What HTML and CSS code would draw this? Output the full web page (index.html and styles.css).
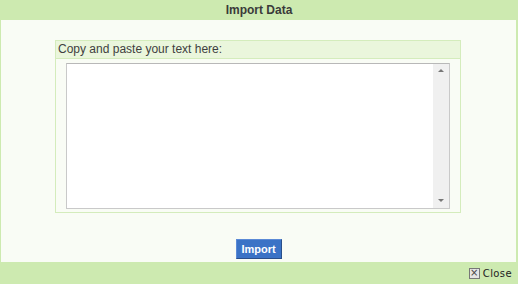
FILE: index.html
```html
<!DOCTYPE html>
<html lang="en">
<head>
    <meta charset="UTF-8">
    <title>Import Data</title>
    <link rel="stylesheet" href="styles.css">
</head>
<body>
    <div class="dialog">
        <div class="dialog-title">Import Data</div>

        <div class="dialog-body">
            <div class="import-box">
                <div class="import-label">Copy and paste your text here:</div>
                <div class="import-area">
                    <div class="text-wrap">
                        <textarea id="importText"></textarea>
                        <div class="scrollbar">
                            <span class="arrow-up"></span>
                            <span class="arrow-down"></span>
                        </div>
                    </div>
                </div>
            </div>
            <div class="actions">
                <button class="import-btn">Import</button>
            </div>
        </div>

        <div class="dialog-footer">
            <span class="close-link"><span class="close-icon">&times;</span>Close</span>
        </div>
    </div>
</body>
</html>
```

FILE: styles.css
```css
body {
    margin: 0;
    padding: 0;
    font-family: Arial, "Liberation Sans", sans-serif;
    background: #cdeab0;
}
.dialog {
    width: 518px;
    height: 284px;
    display: flex;
    flex-direction: column;
    background: #cdeab0;
}
.dialog-title {
    height: 20px;
    line-height: 21px;
    text-align: center;
    font-size: 12px;
    font-weight: bold;
    color: #3a3a3a;
}
.dialog-body {
    flex: 1;
    margin: 0 2px 1px 1px;
    background: #f9fcf5;
    padding-top: 20px;
    display: flex;
    flex-direction: column;
}
.import-box {
    margin: 0 55px 0 54px;
    border: 1px solid #d4ecbc;
}
.import-label {
    height: 17px;
    line-height: 17px;
    background: #eaf6dc;
    border-bottom: 1px solid #d4ecbc;
    font-size: 12px;
    color: #3f3f3f;
    padding-left: 2px;
}
.import-area {
    padding: 4px 10px 3px 10px;
}
.text-wrap {
    display: flex;
    height: 144px;
    border: 1px solid #c9c9c9;
    border-top-color: #b8b8b8;
    background: #fff;
}
.text-wrap textarea {
    flex: 1;
    border: none;
    resize: none;
    outline: none;
    padding: 2px;
    font-family: Arial, "Liberation Sans", sans-serif;
    font-size: 12px;
    background: #fff;
}
/* fake classic scrollbar */
.scrollbar {
    width: 16px;
    background: #f0f0f0;
    display: flex;
    flex-direction: column;
    justify-content: space-between;
    align-items: center;
    padding: 5px 0 6px 0;
}
.arrow-up, .arrow-down {
    width: 0;
    height: 0;
    border-left: 3px solid transparent;
    border-right: 3px solid transparent;
}
.arrow-up {
    border-bottom: 3px solid #777;
}
.arrow-down {
    border-top: 3px solid #777;
}
.actions {
    flex: 1;
    display: flex;
    justify-content: center;
    align-items: flex-end;
    padding-bottom: 3px;
}
.import-btn {
    width: 46px;
    height: 20px;
    padding: 0;
    background: #3b73c6;
    border: 1px solid #2a4f8a;
    border-top-color: #5b8ad6;
    border-left-color: #5b8ad6;
    color: #fff;
    font-family: Arial, "Liberation Sans", sans-serif;
    font-size: 11px;
    font-weight: bold;
    cursor: pointer;
}
.dialog-footer {
    height: 21px;
    display: flex;
    justify-content: flex-end;
    align-items: center;
    padding-right: 6px;
}
.close-link {
    display: flex;
    align-items: center;
    font-family: "DejaVu Sans", Verdana, sans-serif;
    font-size: 10px;
    letter-spacing: 0.4px;
    color: #222;
    cursor: pointer;
}
.close-icon {
    width: 9px;
    height: 9px;
    line-height: 8px;
    text-align: center;
    border: 1px solid #777;
    background: #e4e4e4;
    font-size: 10px;
    letter-spacing: 0;
    color: #444;
    margin-right: 3px;
}
```
